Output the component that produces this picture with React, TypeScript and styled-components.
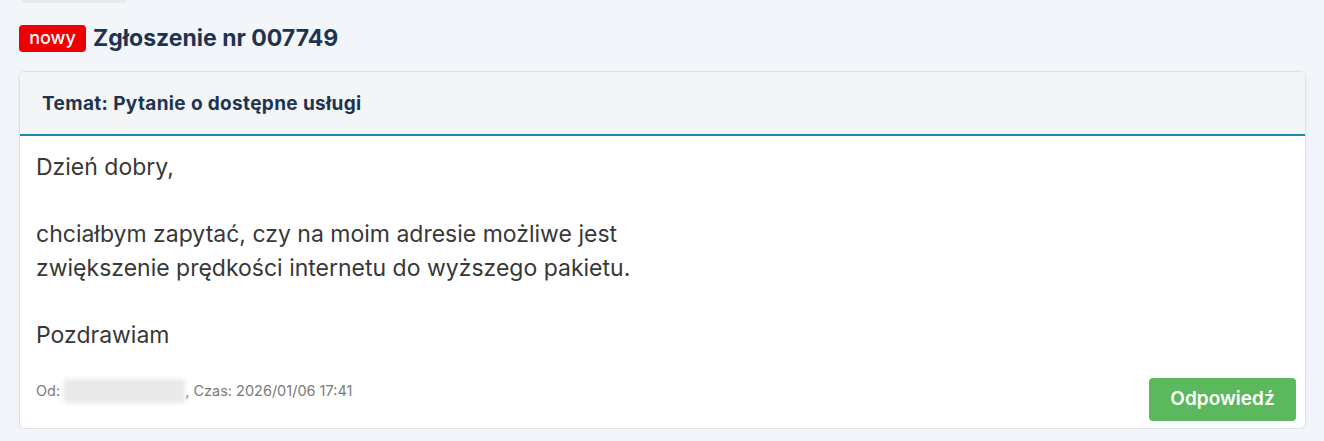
import React from "react";
import styled, { createGlobalStyle } from "styled-components";

const Global = createGlobalStyle`
  html, body { margin: 0; padding: 0; background: #f2f5f9; }
  body { font-family: Inter, "Open Sans", sans-serif; }
`;

const Page = styled.div`
  padding: 0 18px 0 19px;
  display: flex;
  flex-direction: column;
`;

const TopStub = styled.div`
  width: 104px;
  height: 3px;
  margin-left: 3px;
  background: #e6e9ec;
  border-radius: 0 0 3px 3px;
`;

const TitleRow = styled.div`
  display: flex;
  align-items: center;
  gap: 7px;
  margin-top: 22px;
  height: 27px;
`;

const Badge = styled.span`
  background: #ee0000;
  color: #fff;
  font-size: 18px;
  font-weight: 500;
  border-radius: 4px;
  height: 27px;
  width: 67px;
  display: flex;
  align-items: center;
  justify-content: center;
  padding-bottom: 2px;
  box-sizing: border-box;
`;

const Title = styled.h1`
  margin: 0;
  font-size: 23px;
  font-weight: 700;
  color: #1e3350;
  line-height: 27px;
`;

const Card = styled.section`
  margin-top: 19px;
  background: #fff;
  border: 1px solid #dfe2e6;
  border-radius: 6px;
  box-shadow: 0 1px 4px rgba(0, 0, 0, 0.06);
  overflow: hidden;
`;

const CardHeader = styled.header`
  height: 62px;
  background: #f4f5f7;
  border-bottom: 2px solid #1b8bab;
  display: flex;
  align-items: center;
  padding-left: 22px;
  font-size: 19px;
  letter-spacing: 0.35px;
  font-weight: 700;
  color: #1e3350;
`;

const Body = styled.div`
  padding: 15px 16px 0 16px;
  font-size: 23px;
  line-height: 33.6px;
  color: #383838;
`;

const Line = styled.div`
  min-height: 33.6px;
`;

const Footer = styled.div`
  display: flex;
  justify-content: space-between;
  align-items: flex-start;
  padding: 25px 9px 7px 16px;
`;

const Meta = styled.div`
  font-size: 14.5px;
  color: #7a7a7a;
  line-height: 24px;
  margin-top: 1px;
  display: flex;
  align-items: center;
`;

const Blur = styled.span`
  display: inline-block;
  width: 121px;
  height: 24px;
  margin: 0 0 0 4px;
  background: #e9e9ea;
  filter: blur(2px);
`;

const ReplyButton = styled.button`
  background: #5cb85c;
  border: none;
  border-radius: 4px;
  color: #fff;
  font-family: inherit;
  font-size: 19px;
  font-weight: 600;
  width: 147px;
  height: 43px;
  padding: 0 0 2px;
  cursor: pointer;
`;

export default function App() {
  return (
    <>
      <Global />
      <Page>
        <TopStub />
        <TitleRow>
          <Badge>nowy</Badge>
          <Title>Zgłoszenie nr 007749</Title>
        </TitleRow>
        <Card>
          <CardHeader>Temat: Pytanie o dostępne usługi</CardHeader>
          <Body>
            <Line>Dzień dobry,</Line>
            <Line />
            <Line>chciałbym zapytać, czy na moim adresie możliwe jest</Line>
            <Line>zwiększenie prędkości internetu do wyższego pakietu.</Line>
            <Line />
            <Line>Pozdrawiam</Line>
          </Body>
          <Footer>
            <Meta>
              Od: <Blur />, Czas: 2026/01/06 17:41
            </Meta>
            <ReplyButton>Odpowiedź</ReplyButton>
          </Footer>
        </Card>
      </Page>
    </>
  );
}
